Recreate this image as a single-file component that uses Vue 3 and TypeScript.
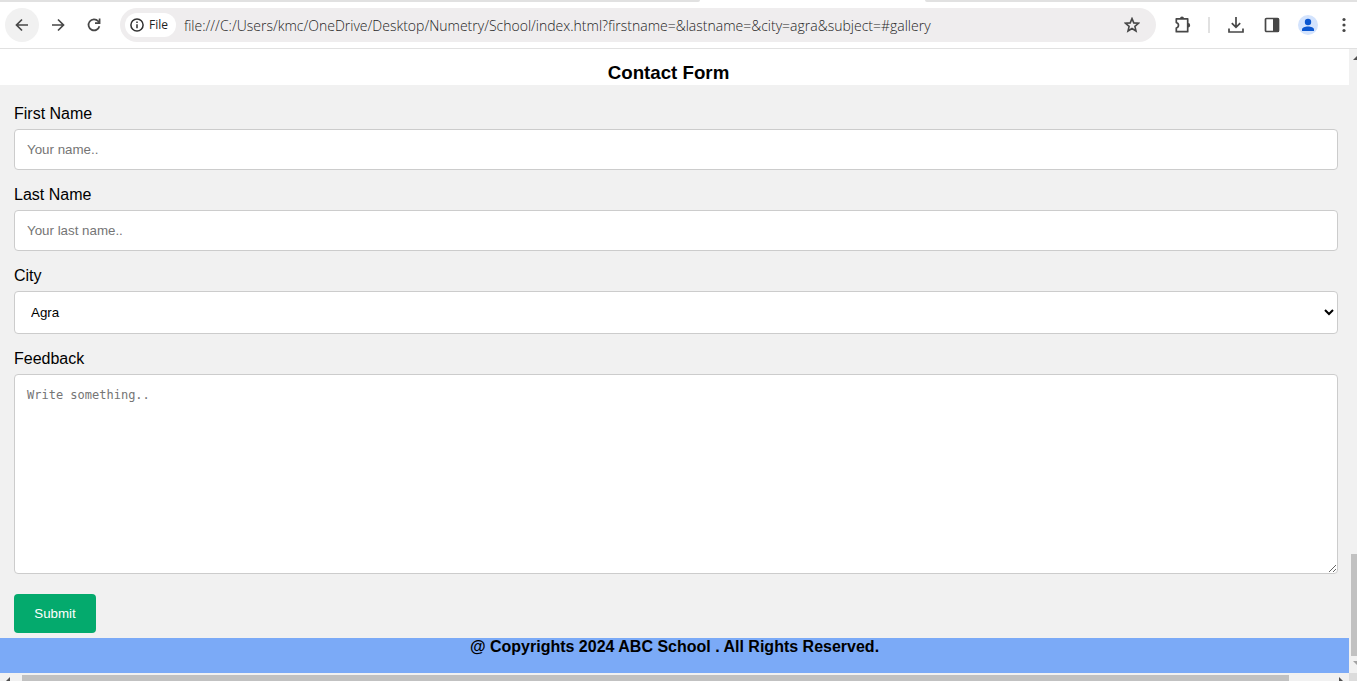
<script setup lang="ts">
import { ref } from 'vue'

const url = ref('file:///C:/Users/kmc/OneDrive/Desktop/Numetry/School/index.html?firstname=&lastname=&city=agra&subject=#gallery')
const firstName = ref('')
const lastName = ref('')
const city = ref('agra')
const feedback = ref('')
const cities = [
  { value: 'agra', label: 'Agra' },
  { value: 'delhi', label: 'Delhi' },
  { value: 'mumbai', label: 'Mumbai' },
]
</script>

<template>
  <div class="window">
    <div class="tab-edge"><span class="tab-gap left"></span><span class="tab-gap right"></span></div>
    <header class="toolbar">
      <button class="round filled" type="button" aria-label="Back">
        <svg width="14" height="14" viewBox="0 0 14 14"><path d="M13 7H1.8M7 1.5 1.5 7 7 12.500" /></svg>
      </button>
      <button class="round" type="button" aria-label="Forward">
        <svg width="14" height="14" viewBox="0 0 14 14"><path d="M1 7h11.200M7 1.500 12.500 7 7 12.500" /></svg>
      </button>
      <button class="round" type="button" aria-label="Reload">
        <svg width="14" height="14" viewBox="0 0 14 14"><path d="M12.400 8.200A5.500 5.500 0 1 1 11.200 3.300L12.600 4.900M12.600 0.600V5.200H8" /></svg>
      </button>
      <div class="address">
        <button class="chip" type="button">
          <svg width="14" height="14" viewBox="0 0 14 14"><circle cx="7" cy="7" r="6.100" /><path d="M7 6.200v4M7 3.600v1.500" /></svg>
          <span>File</span>
        </button>
        <input v-model="url" class="url" type="text" aria-label="Address" spellcheck="false" />
        <button class="star" type="button" aria-label="Bookmark">
          <svg width="16" height="16" viewBox="0 0 16 16"><path d="M8 1.600 9.800 5.900 14.500 6.300 10.900 9.400 12 14 8 11.500 4 14 5.100 9.400 1.500 6.300 6.200 5.900Z" /></svg>
        </button>
      </div>
      <div class="actions">
        <button class="tool" type="button" aria-label="Extensions">
          <svg width="18" height="18" viewBox="0 0 18 18">
            <path d="M3.300 2.800H14.700V15.700H3.300V12C6.200 11.400 6.200 7.200 3.300 6.600Z" stroke-linejoin="round" />
            <path class="solid" d="M7 2.500a2 2 0 0 1 4 0ZM15 7a2.200 2.200 0 0 1 0 4.400Z" />
          </svg>
        </button>
        <span class="divider"></span>
        <button class="tool" type="button" aria-label="Downloads">
          <svg width="18" height="18" viewBox="0 0 18 18"><path d="M9 1V11M4.800 7.200 9 11.400 13.200 7.200M2 12.500V16H16V12.500" /></svg>
        </button>
        <button class="tool" type="button" aria-label="Side panel">
          <svg width="18" height="18" viewBox="0 0 18 18"><rect x="2.500" y="2.500" width="13" height="13" rx="1" /><path class="solid" d="M10 2h5.500v14H10Z" /></svg>
        </button>
        <button class="tool avatar" type="button" aria-label="Profile">
          <svg width="20" height="20" viewBox="0 0 20 20"><circle class="halo" cx="10" cy="10" r="10" /><circle class="person" cx="10" cy="7" r="3.200" /><path class="person" d="M4 16v-1.500C4 12.500 7 11.500 10 11.500S16 12.500 16 14.500V16Z" /></svg>
        </button>
        <button class="tool" type="button" aria-label="Menu">
          <svg width="18" height="18" viewBox="0 0 18 18"><circle class="solid" cx="9" cy="3.500" r="1.600" /><circle class="solid" cx="9" cy="9" r="1.600" /><circle class="solid" cx="9" cy="14.500" r="1.600" /></svg>
        </button>
      </div>
    </header>

    <div class="viewport">
      <div class="page">
        <h3>Contact Form</h3>
        <form @submit.prevent>
          <label for="fname">First Name</label>
          <input id="fname" v-model="firstName" class="field" type="text" placeholder="Your name.." />
          <label for="lname">Last Name</label>
          <input id="lname" v-model="lastName" class="field" type="text" placeholder="Your last name.." />
          <label for="city">City</label>
          <select id="city" v-model="city" class="field city">
            <option v-for="c in cities" :key="c.value" :value="c.value">{{ c.label }}</option>
          </select>
          <label for="feedback">Feedback</label>
          <textarea id="feedback" v-model="feedback" class="field" placeholder="Write something.."></textarea>
          <button class="submit" type="submit">Submit</button>
        </form>
        <footer>@ Copyrights 2024 ABC School . All Rights Reserved.</footer>
      </div>
      <div class="vbar">
        <svg width="4" height="4" viewBox="0 0 4 4"><path d="M0 4 4 0V4Z" fill="#505050" /></svg>
        <span class="vthumb"></span>
        <svg width="4" height="4" viewBox="0 0 4 4"><path d="M0 0H4V4Z" fill="#a3a3a3" /></svg>
      </div>
    </div>
    <div class="hbar">
      <svg width="4" height="4" viewBox="0 0 4 4"><path d="M0 4 4 0V4Z" fill="#505050" /></svg>
      <span class="hthumb"></span>
      <svg width="4" height="4" viewBox="0 0 4 4"><path d="M0 0 4 4H0Z" fill="#505050" /></svg>
      <span class="corner"></span>
    </div>
  </div>
</template>

<style>
body {
  margin: 0;
  background: #fff;
}
</style>

<style scoped>
* {
  box-sizing: border-box;
}
.window {
  display: flex;
  flex-direction: column;
  min-height: 100vh;
  font-family: "Liberation Sans", Arial, sans-serif;
  color: #000;
}
.tab-edge {
  display: flex;
  justify-content: space-between;
  height: 2px;
}
.tab-gap {
  background: #e1e1e1;
}
.left {
  width: 700px;
  border-bottom-right-radius: 4px;
}
.right {
  width: 432px;
  border-bottom-left-radius: 4px;
}
.toolbar {
  display: flex;
  align-items: center;
  height: 47px;
  padding: 0 4px 0 5px;
  border-bottom: 1px solid #e1e1e1;
  background: #fff;
}
.toolbar button {
  display: flex;
  align-items: center;
  justify-content: center;
  padding: 0;
  border: 0;
  background: none;
}
.toolbar svg {
  display: block;
  fill: none;
  stroke: #474747;
  stroke-width: 1.700;
}
.toolbar .round {
  width: 34px;
  height: 34px;
  margin-right: 2px;
  border-radius: 17px;
}
.toolbar .filled {
  background: #f1f1f1;
}
.address {
  display: flex;
  flex: 1;
  align-items: center;
  height: 34px;
  margin-left: 7px;
  padding: 0 16px 0 5px;
  border-radius: 17px;
  background: #efedee;
}
.toolbar .chip {
  justify-content: flex-start;
  gap: 5px;
  width: 51px;
  height: 24px;
  padding-left: 5px;
  border-radius: 12px;
  background: #fff;
  color: #1f1f1f;
  font: 500 12px/16px "Open Sans", "Noto Sans", sans-serif;
}
.toolbar .chip svg {
  stroke: #303030;
  stroke-width: 1.500;
}
.url {
  flex: 1;
  min-width: 0;
  height: 24px;
  margin-left: 8px;
  padding: 0;
  border: 0;
  outline: 0;
  background: none;
  color: #1f1f1f;
  font: 300 14px/20px "Open Sans", "Noto Sans", sans-serif;
}
.toolbar .star svg {
  stroke-width: 1.600;
}
.actions {
  display: flex;
  align-items: center;
  gap: 18px;
  margin-left: 17px;
}
.toolbar .tool svg .solid {
  fill: #474747;
  stroke: none;
}
.toolbar .avatar {
  margin: 0 -1px;
}
.toolbar .avatar .halo {
  fill: #d3e3fd;
  stroke: none;
}
.toolbar .avatar .person {
  fill: #0b57d0;
  stroke: none;
}
.divider {
  width: 2px;
  height: 16px;
  margin: 0 -1px;
  background: #e1e1e1;
}
.viewport {
  display: flex;
  flex: 1;
}
.page {
  display: flex;
  flex: 1;
  flex-direction: column;
  min-width: 0;
}
h3 {
  margin: 0;
  padding: 13px 12px 1px 0;
  line-height: 22px;
  text-align: center;
}
form {
  padding: 20px 11px 5px 14px;
  background: #f1f1f1;
}
label {
  display: block;
  font-size: 16px;
  line-height: 18px;
}
.field {
  display: block;
  width: 100%;
  height: 41px;
  margin: 6px 0 16px;
  padding: 12px;
  border: 1px solid #ccc;
  border-radius: 4px;
  background: #fff;
  color: #000;
  font-family: "Liberation Sans", Arial, sans-serif;
}
.field::placeholder {
  color: #757575;
}
.city {
  height: 43px;
}
textarea.field {
  height: 200px;
  margin-bottom: 20px;
  font: 12px/16px "DejaVu Sans Mono", "Liberation Mono", monospace;
  resize: vertical;
}
.submit {
  display: block;
  min-width: 82px;
  height: 39px;
  padding: 12px 20px;
  border: 0;
  border-radius: 4px;
  background: #04aa6d;
  color: #fff;
  font-family: "Liberation Sans", Arial, sans-serif;
}
footer {
  flex: 1;
  min-height: 35px;
  background: #7baaf7;
  font-size: 16px;
  font-weight: bold;
  line-height: 18px;
  text-align: center;
}
.vbar {
  display: flex;
  flex-direction: column;
  align-items: flex-end;
  width: 8px;
  padding: 7px 0 8px;
  background: #f1f1f1;
}
.vthumb {
  width: 6px;
  height: 102px;
  margin: auto 0 5px;
  background: #c1c1c1;
}
.hbar {
  display: flex;
  align-items: flex-end;
  height: 8px;
  padding-left: 6px;
  background: #f1f1f1;
}
.hthumb {
  flex: 1;
  height: 6px;
  margin: 0 50px 0 12px;
  background: #c1c1c1;
}
.corner {
  width: 8px;
  height: 8px;
  margin-left: 6px;
  background: #dcdcdc;
}
</style>
